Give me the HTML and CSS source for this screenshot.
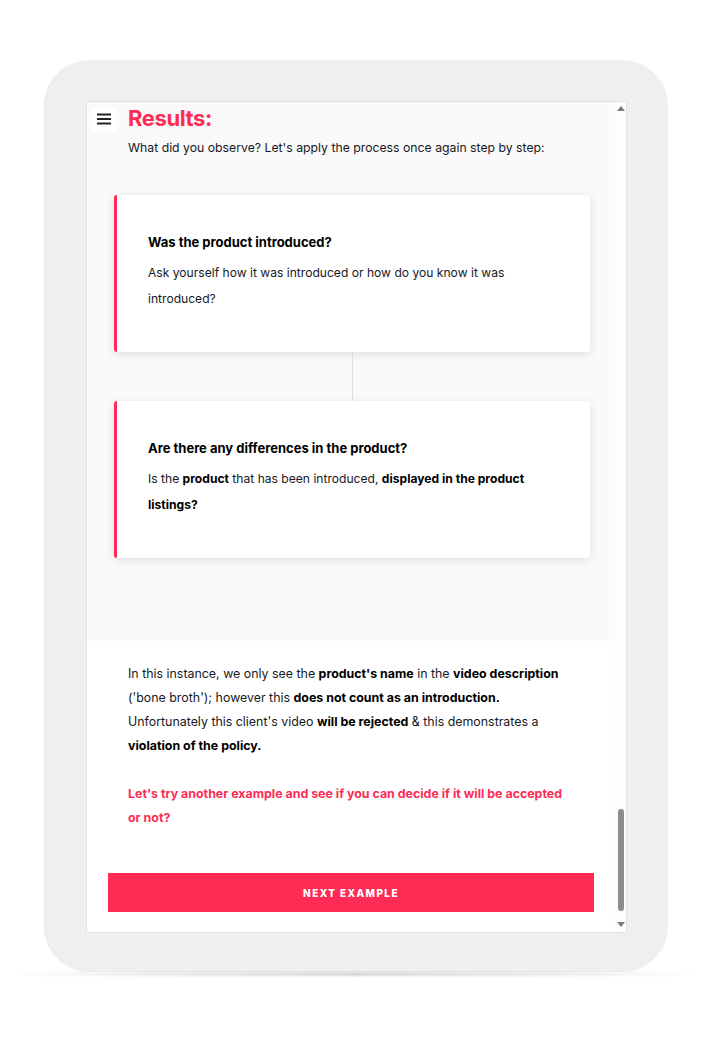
FILE: index.html
```html
<!DOCTYPE html>
<html lang="en">
<head>
<meta charset="utf-8">
<title>Results</title>
<link rel="stylesheet" href="styles.css">
</head>
<body>
<div class="stage">
  <div class="device">
    <div class="screen">
      <div class="content">
        <section class="results">
          <header class="head">
            <button class="menu" aria-label="Menu">
              <svg width="14" height="12" viewBox="0 0 14 12"><rect x="0" y="0.5" width="14" height="2" fill="#222"/><rect x="0" y="5" width="14" height="2" fill="#222"/><rect x="0" y="9.5" width="14" height="2" fill="#222"/></svg>
            </button>
            <h1 class="title">Results:</h1>
          </header>
          <p class="intro">What did you observe? Let's apply the process once again step by step:</p>
          <div class="steps">
            <div class="card">
              <h2 class="card-title">Was the product introduced?</h2>
              <p class="card-body">Ask yourself how it was introduced or how do you know it was introduced?</p>
            </div>
            <div class="connector"></div>
            <div class="card">
              <h2 class="card-title">Are there any differences in the product?</h2>
              <p class="card-body">Is the <b>product</b> that has been introduced, <b>displayed in the product listings?</b></p>
            </div>
          </div>
        </section>
        <section class="summary">
          <p class="text">In this instance, we only see the <b>product's name</b> in the <b>video description</b> ('bone broth'); however this <b>does not count as an introduction.</b> Unfortunately this client's video <b>will be rejected</b> &amp; this demonstrates a <b>violation of the policy.</b></p>
          <p class="text accent">Let's try another example and see if you can decide if it will be accepted or not?</p>
          <button class="next">NEXT EXAMPLE</button>
        </section>
      </div>
      <div class="scrollbar">
        <span class="arrow up"></span>
        <span class="track"></span>
        <span class="thumb"></span>
        <span class="arrow down"></span>
      </div>
    </div>
  </div>
  <div class="floor"></div>
</div>
</body>
</html>
```

FILE: styles.css
```css
* { box-sizing: border-box; }
html, body { margin: 0; padding: 0; background: #ffffff; }
body { font-family: Inter, "Noto Sans", sans-serif; color: #161823; }

.stage { width: 702px; height: 1042px; padding-top: 60px; }

.device {
  margin-left: 44px;
  width: 624px;
  height: 912px;
  border-radius: 46px;
  background: #efefef;
  padding: 41px 41px 39px 42px;
  box-shadow: inset 1px 0 1px rgba(0,0,0,0.03);
}

.floor {
  margin-left: 10px;
  width: 690px;
  height: 4px;
  background: linear-gradient(to right, rgba(0,0,0,0) 0%, rgba(0,0,0,0.08) 20%, rgba(0,0,0,0.16) 50%, rgba(0,0,0,0.08) 80%, rgba(0,0,0,0) 100%);
  filter: blur(1px);
}

.screen {
  width: 541px;
  height: 832px;
  border: 1px solid #e3e3e3;
  background: #ffffff;
  display: flex;
  overflow: hidden;
}

.content { flex: 1; display: flex; flex-direction: column; }

.results {
  background: #fafafa;
  height: 539px;
  padding-top: 2px;
}

.head { display: flex; align-items: center; padding-left: 5px; gap: 12px; height: 28px; }

.menu {
  width: 24px; height: 24px;
  border: 0; padding: 0; margin-top: 2px;
  background: #ffffff;
  display: flex; align-items: center; justify-content: center;
}

.title {
  margin: 0;
  font-size: 22px;
  line-height: 28px;
  font-weight: 700;
  color: #fe2c55;
  letter-spacing: -0.4px;
}

.intro {
  margin: 6px 0 0 41px;
  font-size: 12.25px;
  line-height: 20px;
  color: #161823;
}

.steps { margin: 37px 0 0 27px; width: 476px; display: flex; flex-direction: column; }

.card {
  background: #ffffff;
  border-left: 3px solid #fe2c55;
  border-radius: 3px;
  box-shadow: 0 2px 10px rgba(0,0,0,0.12);
  padding: 37px 34px 41px 31px;
  height: 157px;
}

.card-title {
  margin: 0 0 8px 0;
  font-size: 13px;
  line-height: 20px;
  font-weight: 700;
  color: #000000;
}

.card-body {
  margin: 0;
  font-size: 12.1px;
  line-height: 26px;
  color: #161823;
}

.card-body b { color: #000; }

.connector { align-self: center; width: 1px; height: 49px; background: #dcdcdc; }

.summary { flex: 1; padding: 21px 0 0 0; display: flex; flex-direction: column; }

.text {
  margin: 0 50px 24px 41px;
  font-size: 12.4px;
  line-height: 24px;
  color: #161823;
}

.text b { color: #000; }

.accent { color: #fe2c55; font-weight: 700; margin-bottom: 43px; }

.next {
  margin: 0 21px;
  height: 39px;
  border: 0;
  background: #fe2c55;
  color: #ffffff;
  font-family: Inter, "Noto Sans", sans-serif;
  font-size: 10px;
  font-weight: 800;
  letter-spacing: 1.4px;
}

.scrollbar {
  width: 11px;
  display: flex;
  flex-direction: column;
  align-items: center;
  background: #fdfdfd;
}

.arrow { width: 0; height: 0; border-left: 4px solid transparent; border-right: 4px solid transparent; }
.arrow.up { border-bottom: 5px solid #7a7a7a; margin-top: 4px; }
.arrow.down { border-top: 5px solid #7a7a7a; margin-bottom: 5px; margin-top: 11px; }
.track { flex: 1; }
.thumb { width: 6px; height: 102px; border-radius: 3px; background: #8c8c8c; }
```
